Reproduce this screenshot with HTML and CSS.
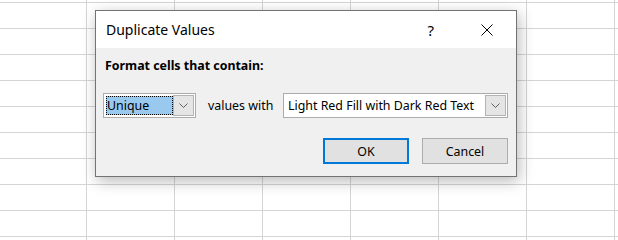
FILE: index.html
```html
<!DOCTYPE html>
<html lang="en">
<head>
<meta charset="utf-8">
<title>Duplicate Values</title>
<link rel="stylesheet" href="styles.css">
</head>
<body>
<div class="sheet"></div>
<div class="dialog" role="dialog" aria-label="Duplicate Values">
  <div class="titlebar">
    <span class="title">Duplicate Values</span>
    <span class="help">?</span>
    <span class="close" aria-label="Close">
      <svg width="12" height="12" viewBox="0 0 12 12"><path d="M0.5 0.5 L11.5 11.5 M11.5 0.5 L0.5 11.5" stroke="#000" stroke-width="1" fill="none"/></svg>
    </span>
  </div>
  <div class="body">
    <div class="label">Format cells that contain:</div>
    <div class="row">
      <div class="combo combo-type">
        <span class="value selected">Unique</span>
        <span class="drop"><svg width="9" height="5" viewBox="0 0 9 5"><polyline points="0.5,0.5 4.5,4.5 8.5,0.5" stroke="#5f5f5f" stroke-width="1" fill="none"/></svg></span>
      </div>
      <span class="with">values with</span>
      <div class="combo combo-format">
        <span class="value">Light Red Fill with Dark Red Text</span>
        <span class="drop"><svg width="9" height="5" viewBox="0 0 9 5"><polyline points="0.5,0.5 4.5,4.5 8.5,0.5" stroke="#5f5f5f" stroke-width="1" fill="none"/></svg></span>
      </div>
    </div>
    <div class="actions">
      <button class="btn btn-default">OK</button>
      <button class="btn">Cancel</button>
    </div>
  </div>
</div>
</body>
</html>
```

FILE: styles.css
```css
html, body {
  margin: 0;
  height: 100%;
}
body {
  position: relative;
  overflow: hidden;
  background: #fff;
  font-family: "Noto Sans", "Open Sans", sans-serif;
  color: #000;
}
.sheet {
  height: 100%;
  background-image:
    linear-gradient(to right, transparent 87px, #d5d5d5 87px),
    linear-gradient(to bottom, transparent 25px, #d5d5d5 25px);
  background-size: 88px 100%, 100% 26px;
  background-position: -1px 0, 0 -23px;
}
.dialog {
  position: absolute;
  left: 95px;
  top: 10px;
  width: 422px;
  height: 167px;
  box-sizing: border-box;
  border: 1px solid #737373;
  background: #f0f0f0;
  box-shadow: 2px 4px 14px rgba(0, 0, 0, 0.28);
  display: flex;
  flex-direction: column;
}
.titlebar {
  height: 37px;
  background: #fff;
  display: flex;
  align-items: center;
  padding-left: 10px;
}
.title {
  flex: 1;
  font-size: 14px;
}
.help {
  font-size: 15px;
  margin-right: 47px;
}
.close {
  display: flex;
  margin-right: 23px;
}
.body {
  flex: 1;
  padding: 10px 8px 0 7px;
  font-size: 12.4px;
}
.label {
  font-weight: bold;
  line-height: 16px;
  padding-left: 2px;
}
.row {
  display: flex;
  align-items: center;
  margin-top: 19px;
}
.combo {
  display: flex;
  box-sizing: border-box;
  height: 25px;
  border: 1px solid #acacac;
  background: #fff;
  padding: 1px 1px 1px 2px;
}
.combo-type {
  width: 93px;
}
.combo-format {
  width: 225px;
  margin-left: auto;
}
.value {
  flex: 1;
  display: flex;
  align-items: center;
  padding-left: 2px;
  white-space: nowrap;
}
.value.selected {
  margin: 1px 0;
  padding-left: 1px;
  background: #99c9ef;
  outline: 1px dotted #000;
  outline-offset: -1px;
}
.drop {
  width: 21px;
  box-sizing: border-box;
  border: 1px solid #b3b3b3;
  background: #e5e5e5;
  display: flex;
  align-items: center;
  justify-content: center;
}
.with {
  margin-left: 12px;
}
.actions {
  display: flex;
  justify-content: flex-end;
  gap: 13px;
  margin-top: 20px;
}
.btn {
  width: 86px;
  height: 26px;
  box-sizing: border-box;
  border: 1px solid #adadad;
  background: #e1e1e1;
  font-family: inherit;
  font-size: 12.4px;
  color: #000;
  padding: 0;
}
.btn-default {
  border: 2px solid #0078d7;
}
```
